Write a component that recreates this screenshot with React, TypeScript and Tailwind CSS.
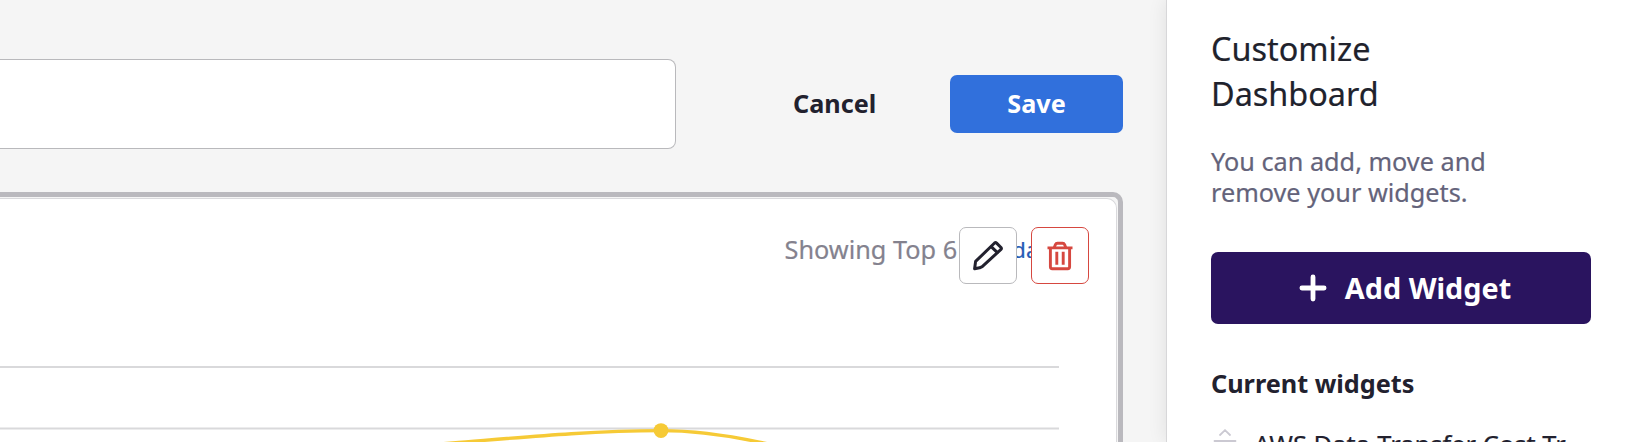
function PencilIcon() {
  return (
    <svg className="h-[30px] w-[30px]" viewBox="0 0 30 30" fill="none" stroke="#22212e" strokeWidth="3" strokeLinejoin="round" strokeLinecap="round">
      <path d="M1.6 27.8 L2.6 20.4 L21.6 2 Q22.6 1.2 23.6 2.1 L28 6.5 Q28.8 7.4 28 8.4 L9.2 25.6 L6.6 26.8 Z" />
      <path d="M18.4 5.8 L24.2 11.4" />
    </svg>
  );
}

function TrashIcon() {
  return (
    <svg className="h-[30px] w-[26px]" viewBox="0 0 26 30" fill="none" stroke="#d64840" strokeWidth="2.9">
      <path d="M0.5 6.9 H25.5" />
      <path d="M3.4 7 V25.8 Q3.4 27.7 5.3 27.7 H20.7 Q22.6 27.7 22.6 25.8 V7" />
      <path d="M7.2 6.8 L8.4 3.6 Q9 2.2 10.4 2.2 H15.6 Q17 2.2 17.6 3.6 L18.8 6.8" />
      <path d="M9.8 10.8 V23.8 M16.2 10.8 V23.8" />
    </svg>
  );
}

function PlusIcon() {
  return (
    <svg className="h-7 w-7" viewBox="0 0 28 28" stroke="#fff" strokeWidth="4.8" strokeLinecap="round">
      <path d="M14 2.9 V25.1 M2.9 14 H25.1" />
    </svg>
  );
}

function DragIcon() {
  return (
    <svg className="mt-[2px] h-[28px] w-6" viewBox="0 0 24 28" fill="none" stroke="#cbc9d2" strokeWidth="1.8" strokeLinecap="round">
      <path d="M7 6 L12 1.2 L17 6 M1.5 12 H22.5 M1.5 18 H22.5 M7 23 L12 27 L17 23" />
    </svg>
  );
}

function CostChart() {
  return (
    <svg className="block h-[120px] w-[1059px] shrink-0" viewBox="0 345 1059 120" fill="none">
      <path d="M0 367 H1059" stroke="#d9d9db" strokeWidth="2" />
      <path d="M0 428.5 H1059" stroke="#d9d9db" strokeWidth="2" />
      <path d="M393 448 L453 442.9 C520 437.5 590 430.6 661 430.6 C695 430.6 728 435.5 758 441.8 L820 455" stroke="#f6ca36" strokeWidth="3.4" />
      <circle cx="661" cy="430.6" r="7.4" fill="#f6ca36" />
    </svg>
  );
}

function Toolbar() {
  return (
    <header className="flex h-[90px] w-[1123px] items-center">
      <div className="h-full w-[676px] rounded-r-lg border border-l-0 border-[#b9b9bc] bg-white" />
      <button className="ml-[117px] pb-[2px] text-[25.2px] leading-[34px] font-bold">Cancel</button>
      <button className="ml-auto h-[58px] w-[173px] rounded-[7px] bg-[#3170dc] pb-[2px] text-[25.2px] leading-[34px] font-bold text-white">
        Save
      </button>
    </header>
  );
}

function WidgetCard() {
  return (
    <section className="mt-[43px] h-[300px] w-[1123px] rounded-tr-[10px] border-t-[5px] border-r-[5px] border-[#bab9be] pt-px pr-px">
      <div className="flex h-full flex-col overflow-hidden rounded-tr-[10px] border-t border-r border-[#d9d9dc] bg-white">
        <div className="relative flex h-[146px] items-start pt-[32px] pl-[784.5px] text-[25.3px] leading-[36px] whitespace-nowrap">
          <span className="text-[#84828e] [-webkit-text-stroke:0.2px]">Showing Top 6</span>
          <span className="ml-[17px] text-[22px] text-[#265bb5] [-webkit-text-stroke:0.2px]">Set dates</span>
          <div className="absolute top-[28px] left-[959px] flex gap-[14px]">
            <button className="flex h-[57px] w-[58px] items-center justify-center rounded-[7px] border border-[#b9b9bc] bg-white">
              <PencilIcon />
            </button>
            <button className="flex h-[57px] w-[58px] items-center justify-center rounded-[7px] border border-[#d64840] bg-white">
              <TrashIcon />
            </button>
          </div>
        </div>
        <CostChart />
      </div>
    </section>
  );
}

function Sidebar() {
  return (
    <aside className="relative w-[462px] shrink-0 border-l border-[#d7d7d9] bg-white pt-[26px] pl-[44px] shadow-[0_0_18px_rgba(0,0,0,0.09)]">
      <h2 className="w-[240px] text-[32.4px] leading-[45px] text-[#20222c] [-webkit-text-stroke:0.2px]">Customize Dashboard</h2>
      <p className="mt-[30px] w-[300px] text-[25.25px] leading-[31px] text-[#64637a] [-webkit-text-stroke:0.2px]">
        You can add, move and remove your widgets.
      </p>
      <button className="mt-[44px] flex h-[72px] w-[380px] items-center justify-center gap-[18px] rounded-[7px] bg-[#2a145f] pl-[8px] text-[28.8px] font-bold text-white">
        <PlusIcon />
        Add Widget
      </button>
      <h3 className="mt-[42px] text-[25.25px] leading-[34px] font-bold">Current widgets</h3>
      <div className="mt-[27px] flex items-start gap-[17px] pl-[2px] text-[25.5px] leading-[34px] whitespace-nowrap">
        <DragIcon />
        <span className="[-webkit-text-stroke:0.2px]">AWS Data-Transfer Cost Tr</span>
      </div>
    </aside>
  );
}

export default function App() {
  return (
    <div className="flex h-[442px] w-[1628px] overflow-hidden bg-[#f5f5f5] font-['Noto_Sans',sans-serif] text-[#22212e]">
      <main className="w-[1166px] shrink-0 pt-[59px]">
        <Toolbar />
        <WidgetCard />
      </main>
      <Sidebar />
    </div>
  );
}
